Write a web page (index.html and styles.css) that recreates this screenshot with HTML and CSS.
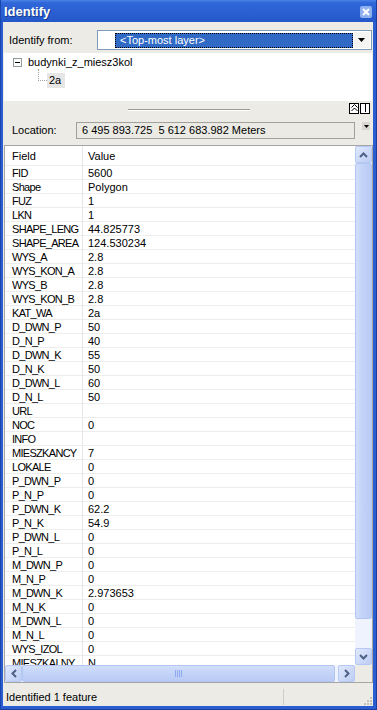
FILE: index.html
```html
<!DOCTYPE html>
<html lang="en">
<head>
  <meta charset="UTF-8" />
  <title>Identify</title>
  <link rel="stylesheet" href="styles.css">
</head>
<body>
  <div class="window">
    <div class="titlebar">
      <span class="title">Identify</span>
      <span class="close">
        <svg width="12" height="12" viewBox="0 0 12 12"><path d="M3 3 L9 9 M9 3 L3 9" stroke="#fff" stroke-width="2" /></svg>
      </span>
    </div>

    <div class="body">
      <div class="from-row">
        <span class="from-label">Identify from:</span>
        <div class="combo">
          <span class="swatch"></span>
          <span class="combo-sel">&lt;Top-most layer&gt;</span>
          <span class="combo-btn">
            <svg width="8" height="5" viewBox="0 0 8 5"><path d="M0 0 H7 L3.5 4 Z" fill="#000" /></svg>
          </span>
        </div>
      </div>

      <div class="tree">
        <div class="tree-node">
          <span class="expander"><svg width="9" height="9" viewBox="0 0 9 9"><rect x="0.5" y="0.5" width="8" height="8" fill="#fff" stroke="#919b9c" /><path d="M2 4.5 H7" stroke="#000" /></svg></span>
          <span>budynki_z_miesz3kol</span>
        </div>
        <div class="tree-child">
          <span class="dots"></span>
          <span class="leaf">2a</span>
        </div>
      </div>

      <div class="splitter">
        <span class="grip"></span>
        <div class="split-tools">
          <span class="tool">
            <svg width="7" height="8" viewBox="0 0 7 8"><path d="M0.5 3.5 L3.5 0.5 L6.5 3.5 M0.5 7 L3.5 4 L6.5 7" stroke="#000" fill="none" /></svg>
          </span>
          <span class="tool">
            <svg width="7" height="8" viewBox="0 0 7 8"><path d="M3.5 0 V8" stroke="#000" /></svg>
          </span>
        </div>
      </div>

      <div class="loc-row">
        <span class="loc-label">Location:</span>
        <div class="loc-box">6 495 893.725&nbsp; 5 612 683.982 Meters</div>
        <span class="loc-btn"><svg width="5" height="3" viewBox="0 0 5 3"><path d="M0 0 H5 L2.5 3 Z" fill="#000" /></svg></span>
      </div>

      <div class="grid">
        <div class="grid-main">
          <div class="rows" id="rows">
            <div class="row head"><span>Field</span><span>Value</span></div>
          </div>
          <div class="vscroll">
            <span class="sbtn">
              <svg width="9" height="6" viewBox="0 0 9 6"><path d="M1 5 L4.5 1.5 L8 5" stroke="#4d6185" stroke-width="2" fill="none" /></svg>
            </span>
            <span class="vthumb"></span>
            <span class="vtrack"></span>
            <span class="sbtn">
              <svg width="9" height="6" viewBox="0 0 9 6"><path d="M1 1 L4.5 4.5 L8 1" stroke="#4d6185" stroke-width="2" fill="none" /></svg>
            </span>
          </div>
        </div>
        <div class="hscroll-row">
          <div class="hscroll">
            <span class="sbtn">
              <svg width="6" height="9" viewBox="0 0 6 9"><path d="M5 1 L1.5 4.5 L5 8" stroke="#4d6185" stroke-width="2" fill="none" /></svg>
            </span>
            <span class="hthumb">
              <svg width="8" height="7" viewBox="0 0 8 7"><path d="M0.5 0 V7 M2.5 0 V7 M4.5 0 V7 M6.5 0 V7" stroke="#8faaf0" /></svg>
            </span>
            <span class="sbtn">
              <svg width="6" height="9" viewBox="0 0 6 9"><path d="M1 1 L4.5 4.5 L1 8" stroke="#4d6185" stroke-width="2" fill="none" /></svg>
            </span>
          </div>
          <span class="corner"></span>
        </div>
      </div>

      <div class="status">
        <span class="status-text">Identified 1 feature</span>
        <span class="status-grip">
          <svg width="10" height="10" viewBox="0 0 10 10">
            <rect x="8" y="2" width="2" height="2" fill="#c3c2b9" />
            <rect x="5" y="5" width="2" height="2" fill="#c3c2b9" />
            <rect x="8" y="5" width="2" height="2" fill="#c3c2b9" />
            <rect x="2" y="8" width="2" height="2" fill="#c3c2b9" />
            <rect x="5" y="8" width="2" height="2" fill="#c3c2b9" />
            <rect x="8" y="8" width="2" height="2" fill="#c3c2b9" />
          </svg>
        </span>
      </div>
    </div>
  </div>

  <script>
    const fields = [
      ["FID", "5600"], ["Shape", "Polygon"], ["FUZ", "1"], ["LKN", "1"],
      ["SHAPE_LENG", "44.825773"], ["SHAPE_AREA", "124.530234"],
      ["WYS_A", "2.8"], ["WYS_KON_A", "2.8"], ["WYS_B", "2.8"], ["WYS_KON_B", "2.8"],
      ["KAT_WA", "2a"], ["D_DWN_P", "50"], ["D_N_P", "40"], ["D_DWN_K", "55"],
      ["D_N_K", "50"], ["D_DWN_L", "60"], ["D_N_L", "50"], ["URL", ""],
      ["NOC", "0"], ["INFO", ""], ["MIESZKANCY", "7"], ["LOKALE", "0"],
      ["P_DWN_P", "0"], ["P_N_P", "0"], ["P_DWN_K", "62.2"], ["P_N_K", "54.9"],
      ["P_DWN_L", "0"], ["P_N_L", "0"], ["M_DWN_P", "0"], ["M_N_P", "0"],
      ["M_DWN_K", "2.973653"], ["M_N_K", "0"], ["M_DWN_L", "0"], ["M_N_L", "0"],
      ["WYS_IZOL", "0"], ["MIESZKALNY", "N"]
    ];

    const rows = document.getElementById("rows");
    fields.forEach(([name, value]) => {
      const row = document.createElement("div");
      row.className = "row";
      row.innerHTML = `<span>${name}</span><span>${value}</span>`;
      rows.appendChild(row);
    });
  </script>
</body>
</html>
```

FILE: styles.css
```css
body {
  margin: 0;
  font-family: 'Liberation Sans', Arial, sans-serif;
  font-size: 11px;
  color: #000;
  background: #fff;
}

.window {
  width: 377px;
  height: 710px;
  box-sizing: border-box;
  background: #2a5dd0;
  border-left: 1px solid #1a46b0;
  border-right: 1px solid #1a3f9e;
  border-bottom: 1px solid #1a3f9e;
  display: flex;
  flex-direction: column;
}

.titlebar {
  height: 22px;
  flex: none;
  display: flex;
  align-items: center;
  justify-content: space-between;
  padding: 0 4px 0 3px;
  background: linear-gradient(#4a82e8 0, #2f66d8 3px, #2a5fd2 60%, #2457c8 100%);
}
.title {
  color: #fff;
  font-weight: bold;
  font-size: 13px;
  text-shadow: 1px 1px 0 #1a3c8c;
}
.close {
  width: 12px;
  height: 12px;
  margin-top: 2px;
  background: #8fb0ee;
  border-radius: 2px;
  display: flex;
}

.body {
  flex: 1;
  margin: 0 3px 3px 2px;
  background: #ecebe6;
  display: flex;
  flex-direction: column;
  min-height: 0;
}

.from-row {
  height: 30px;
  flex: none;
  display: flex;
  align-items: center;
  padding: 6px 1px 0 6px;
  box-sizing: border-box;
}
.from-label {
  width: 88px;
  flex: none;
}
.combo {
  flex: 1;
  height: 20px;
  box-sizing: border-box;
  border: 1px solid #7f9db9;
  background: #fff;
  display: flex;
  align-items: center;
  padding: 1px;
}
.swatch {
  width: 16px;
  height: 16px;
  flex: none;
}
.combo-sel {
  flex: 1;
  height: 15px;
  line-height: 15px;
  background: #316ac5;
  color: #fff;
  padding-left: 5px;
  outline: 1px dotted #000;
  outline-offset: -1px;
}
.combo-btn {
  width: 16px;
  height: 16px;
  margin-left: 1px;
  flex: none;
  display: flex;
  align-items: center;
  justify-content: center;
  background: #f4f4f2;
}

.tree {
  height: 48px;
  flex: none;
  margin: 1px 1px 0 1px;
  background: #fff;
  padding-top: 2px;
  box-sizing: border-box;
}
.tree-node {
  display: flex;
  align-items: center;
  height: 14px;
  padding-left: 9px;
  gap: 6px;
}
.expander {
  display: flex;
}
.tree-child {
  display: flex;
  align-items: flex-start;
  padding-left: 34px;
}
.dots {
  width: 8px;
  height: 11px;
  border-left: 1px dotted #a0a0a0;
  border-bottom: 1px dotted #a0a0a0;
}
.leaf {
  margin-top: 4px;
  padding: 0 2px;
  height: 15px;
  line-height: 15px;
  width: 14px;
  background: #e6e6e6;
}

.splitter {
  height: 17px;
  flex: none;
  display: flex;
  align-items: center;
  justify-content: space-between;
  padding: 0 3px 0 125px;
}
.grip {
  width: 122px;
  height: 1px;
  background: #9c9b96;
  border-bottom: 1px solid #fff;
  margin-top: 1px;
}
.split-tools {
  display: flex;
  gap: 1px;
  margin-top: -3px;
}
.tool {
  width: 8px;
  height: 9px;
  border: 1px solid #000;
  background: #fff;
  display: flex;
  align-items: center;
  justify-content: center;
}

.loc-row {
  height: 27px;
  flex: none;
  display: flex;
  align-items: center;
  padding: 0 3px 3px 9px;
  box-sizing: border-box;
}
.loc-label {
  width: 64px;
  flex: none;
}
.loc-box {
  flex: 1;
  height: 17px;
  box-sizing: border-box;
  border: 1px solid #a2a09a;
  background: #ebeae4;
  line-height: 15px;
  padding-left: 5px;
}
.loc-btn {
  width: 8px;
  height: 8px;
  margin-left: 7px;
  align-self: flex-start;
  margin-top: 4px;
  background: #d8d6cf;
  display: flex;
  align-items: center;
  justify-content: center;
}

.grid {
  height: 538px;
  flex: none;
  margin: 0 0 0 1px;
  border: 1px solid #a5a5a5;
  box-sizing: border-box;
  background: #fff;
  display: flex;
  flex-direction: column;
}
.grid-main {
  flex: 1;
  display: flex;
  min-height: 0;
}
.rows {
  flex: 1;
  overflow: hidden;
}
.row {
  display: grid;
  grid-template-columns: 78px 1fr;
  height: 14px;
  box-sizing: border-box;
  border-bottom: 1px solid #ededed;
  line-height: 14px;
  white-space: nowrap;
}
.row span:first-child {
  padding-left: 7px;
  border-right: 1px solid #e6e6e6;
  letter-spacing: -0.7px;
  overflow: hidden;
}
.row span:last-child {
  padding-left: 5px;
}
.row.head {
  height: 20px;
  line-height: 21px;
}
.row.head span:first-child {
  letter-spacing: 0;
}

.vscroll {
  width: 17px;
  flex: none;
  display: flex;
  flex-direction: column;
  background: #eef3fd;
}
.sbtn {
  width: 17px;
  height: 17px;
  flex: none;
  box-sizing: border-box;
  border: 1px solid #b6c9f4;
  border-radius: 2px;
  background: linear-gradient(135deg, #e0e9fd, #bccdf3);
  display: flex;
  align-items: center;
  justify-content: center;
}
.vthumb {
  height: 456px;
  flex: none;
  box-sizing: border-box;
  border: 1px solid #b3c6f2;
  border-radius: 2px;
  background: linear-gradient(90deg, #d2defa, #c3d3f8 40%, #b9caf5);
}
.vtrack {
  flex: 1;
}

.hscroll-row {
  height: 17px;
  flex: none;
  display: flex;
}
.hscroll {
  flex: 1;
  display: flex;
  background: #eef3fd;
}
.hthumb {
  flex: 1;
  box-sizing: border-box;
  border: 1px solid #b3c6f2;
  border-radius: 2px;
  margin-right: 3px;
  background: linear-gradient(#d2defa, #c3d3f8 50%, #b9caf5);
  display: flex;
  align-items: center;
  justify-content: center;
}
.corner {
  width: 17px;
  background: #ecebe6;
}

.status {
  flex: 1;
  display: flex;
  align-items: center;
  justify-content: space-between;
  padding-left: 3px;
}
.status-text {
  width: 277px;
  height: 16px;
  line-height: 16px;
  margin-top: 5px;
  border-right: 1px solid #cfcdc4;
}
.status-grip {
  align-self: flex-end;
  display: flex;
  margin: 0 1px 1px 0;
}
```
